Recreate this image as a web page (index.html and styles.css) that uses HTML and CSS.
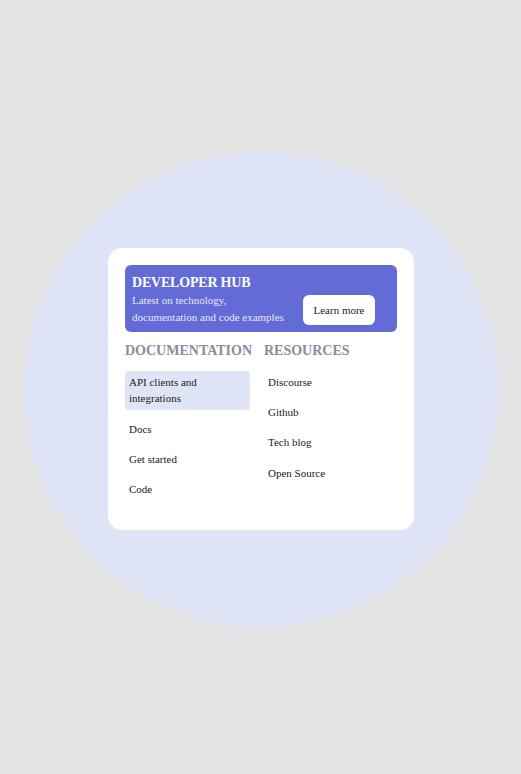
FILE: index.html
```html
<!DOCTYPE html>
<html>
<head>
<meta charset="utf-8">
<link rel="stylesheet" href="styles.css">
</head>
<body>
<div class="circle">
  <div class="card">
    <div class="banner">
      <div class="banner-text">
        <div class="banner-title">DEVELOPER HUB</div>
        <div class="banner-sub">Latest on technology,<br>documentation and code examples</div>
      </div>
      <a class="btn">Learn more</a>
    </div>
    <div class="cols">
      <div class="col">
        <div class="col-title">DOCUMENTATION</div>
        <ul class="list">
          <li class="item active">API clients and integrations</li>
          <li class="item">Docs</li>
          <li class="item">Get started</li>
          <li class="item">Code</li>
        </ul>
      </div>
      <div class="col">
        <div class="col-title">RESOURCES</div>
        <ul class="list">
          <li class="item first">Discourse</li>
          <li class="item">Github</li>
          <li class="item">Tech blog</li>
          <li class="item last">Open Source</li>
        </ul>
      </div>
    </div>
  </div>
</div>
</body>
</html>
```
FILE: styles.css
```css
* { box-sizing: border-box; }
html, body { margin: 0; padding: 0; }
body {
  width: 521px;
  height: 774px;
  background: #e5e5e5;
  display: flex;
  align-items: center;
  justify-content: center;
  padding: 4px 0 0 1px;
  font-family: "Liberation Serif", "Times New Roman", serif;
}
.circle {
  width: 475px;
  height: 475px;
  border-radius: 50%;
  background: #dfe5f7;
  display: flex;
  align-items: center;
  justify-content: center;
}
.card {
  width: 306px;
  height: 282px;
  background: #fff;
  border-radius: 14px;
  padding: 17px;
  margin-top: -1px;
}
.banner {
  background: #636bd6;
  border-radius: 6px;
  height: 67px;
  display: flex;
  align-items: flex-end;
  justify-content: space-between;
  padding: 8px 22px 6px 7px;
}
.banner-title {
  color: #fff;
  font-weight: bold;
  font-size: 14px;
  line-height: 18px;
  letter-spacing: -0.2px;
}
.banner-sub {
  color: #e6e8f8;
  font-size: 11px;
  line-height: 17px;
}
.btn {
  display: flex;
  align-items: center;
  justify-content: center;
  width: 72px;
  height: 30px;
  margin-bottom: 1px;
  background: #fff;
  border-radius: 6px;
  color: #222;
  font-size: 11px;
}
.cols {
  display: flex;
  gap: 14px;
  margin-top: 11px;
}
.col:first-child { width: 125px; }
.col:last-child { flex: 1; }
.col-title {
  color: #8b8b9b;
  font-weight: bold;
  font-size: 14px;
  line-height: 16px;
  white-space: nowrap;
}
.list {
  list-style: none;
  margin: 12px 0 0;
  padding: 0;
  display: flex;
  flex-direction: column;
  gap: 6px;
}
.item {
  padding: 4px;
  font-size: 11px;
  line-height: 16px;
  color: #1a1a1a;
  border-radius: 3px;
}
.item.active {
  background: #dfe5f7;
  padding: 3px 4px 4px;
  margin-bottom: 1px;
}
.item.first {
  padding-top: 3px;
  padding-bottom: 4px;
}
.item.last {
  padding-top: 5px;
}
```
